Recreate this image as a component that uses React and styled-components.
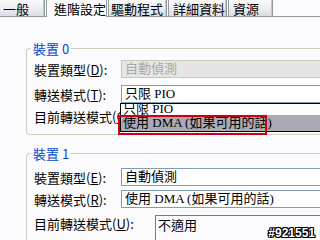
import React from "react";
import styled, { createGlobalStyle } from "styled-components";

const GlobalStyle = createGlobalStyle`
  html, body {
    margin: 0;
    padding: 0;
  }
  body {
    width: 320px;
    height: 240px;
    overflow: hidden;
    background: #fcfcfe;
    font-family: "Noto Sans CJK TC", "Liberation Sans", sans-serif;
  }
`;

const Window = styled.div`
  position: relative;
  width: 320px;
  height: 240px;
  overflow: hidden;
  background: #fcfcfe;
`;

const TabStrip = styled.div`
  display: flex;
  align-items: flex-end;
  gap: 1px;
  height: 20px;
  margin-top: -4px;
  margin-left: -2px;
  border-bottom: 1px solid #919b9c;
`;

const Tab = styled.div`
  flex: none;
  box-sizing: border-box;
  width: ${(p) => p.w}px;
  height: ${(p) => (p.active ? 21 : 20)}px;
  margin-bottom: ${(p) => (p.active ? -1 : 0)}px;
  padding: 4px 0 0 ${(p) => p.pad}px;
  border: 1px solid #919b9c;
  border-bottom: none;
  border-radius: 3px 3px 0 0;
  background: ${(p) =>
    p.active
      ? "#fcfcfe"
      : "linear-gradient(#ffffff 0%, #f3f3f6 45%, #dcdce6 100%)"};
  box-shadow: ${(p) => (p.active ? "none" : "inset -1px 0 #c4c4d2")};
  position: relative;
  z-index: ${(p) => (p.active ? 1 : 0)};
  font-size: 13px;
  line-height: 16px;
  color: #000;
  white-space: nowrap;
`;

const Panel = styled.div`
  padding: 25px 0 0 26px;
`;

const Group = styled.fieldset`
  box-sizing: border-box;
  width: 400px;
  min-width: 0;
  margin: 0 0 ${(p) => p.mb || 0}px 0;
  padding: ${(p) => p.pt}px 0 ${(p) => p.pb}px 7px;
  border: 1px solid #d0d0bf;
  border-right: none;
  border-radius: 4px 0 0 4px;
`;

const Legend = styled.legend`
  margin-left: -3px;
  padding: 0 2px;
  color: #0046d5;
  font-size: 13px;
  line-height: 13px;
`;

const Rows = styled.div`
  display: flex;
  flex-direction: column;
  gap: ${(p) => p.gap}px;
`;

const Row = styled.div`
  display: flex;
  align-items: ${(p) => (p.top ? "flex-start" : "center")};
  height: ${(p) => p.h || 18}px;
`;

const Label = styled.div`
  flex: none;
  width: ${(p) => p.w}px;
  margin-top: ${(p) => p.mt || 0}px;
  font-size: 13px;
  line-height: 15px;
  color: #000;
  white-space: nowrap;
  overflow: hidden;
`;

const Key = styled.span`
  text-decoration: underline;
`;

const Combo = styled.div`
  position: relative;
  flex: none;
  box-sizing: border-box;
  width: 260px;
  height: 18px;
  padding-left: 3px;
  border: 1px solid ${(p) => (p.disabled ? "#c9c7ba" : "#7f9db9")};
  background: ${(p) => (p.disabled ? "#e6e6e6" : "#ffffff")};
  color: ${(p) => (p.disabled ? "#a8a8a8" : "#000")};
  font-family: "Liberation Serif", "Noto Sans CJK TC", serif;
  font-size: 13px;
  line-height: 16px;
  white-space: nowrap;
`;

const DropList = styled.div`
  position: absolute;
  top: 100%;
  left: -2px;
  z-index: 2;
  box-sizing: border-box;
  width: 220px;
  margin-top: 1px;
  border: 1px solid #000;
  background: #fff;
`;

const Option = styled.div`
  height: ${(p) => p.h}px;
  padding-left: 2px;
  overflow: hidden;
  background: ${(p) => (p.selected ? "#aaaab4" : "#ffffff")};
  color: #000;
  line-height: ${(p) => p.lh}px;
`;

const Marker = styled.div`
  position: absolute;
  left: -3px;
  top: 11px;
  box-sizing: border-box;
  width: 149px;
  height: 20px;
  border: 2px solid #d2000f;
`;

const StaticBox = styled.div`
  flex: none;
  box-sizing: border-box;
  width: 220px;
  height: 26px;
  margin-top: 3px;
  padding: 1px 0 0 2px;
  border-top: 1px solid #7a7a7a;
  border-left: 1px solid #7a7a7a;
  font-size: 13px;
  line-height: 16px;
  color: #000;
`;

const Watermark = styled.div`
  position: absolute;
  right: 5px;
  bottom: 1px;
  font-family: "Liberation Sans", sans-serif;
  font-weight: bold;
  font-size: 12px;
  line-height: 12px;
  color: #fff;
  text-shadow: 1px 0 #000, -1px 0 #000, 0 1px #000, 0 -1px #000,
    1px 1px #000, -1px -1px #000, 1px -1px #000, -1px 1px #000;
`;

const tabs = [
  { name: "一般", w: 47, pad: 4 },
  { name: "進階設定", w: 61, pad: 7, active: true },
  { name: "驅動程式", w: 59, pad: 2 },
  { name: "詳細資料", w: 59, pad: 4 },
  { name: "資源", w: 45, pad: 4 },
];

export default function App() {
  return (
    <Window>
      <GlobalStyle />
      <TabStrip>
        {tabs.map((t) => (
          <Tab key={t.name} w={t.w} pad={t.pad} active={t.active}>
            {t.name}
          </Tab>
        ))}
      </TabStrip>
      <Panel>
        <Group pt={5} pb={12} mb={12}>
          <Legend>裝置 0</Legend>
          <Rows gap={7}>
            <Row>
              <Label w={87}>裝置類型(<Key>D</Key>):</Label>
              <Combo disabled>自動偵測</Combo>
            </Row>
            <Row>
              <Label w={87}>轉送模式(<Key>T</Key>):</Label>
              <Combo>
                只限 PIO
                <DropList>
                  <Option h={11} lh={10}>只限 PIO</Option>
                  <Option h={16} lh={16} selected>使用 DMA (如果可用的話)</Option>
                  <Marker />
                </DropList>
              </Combo>
            </Row>
            <Row h={12}>
              <Label w={87}>目前轉送模式(<Key>C</Key>):</Label>
            </Row>
          </Rows>
        </Group>
        <Group pt={8} pb={0}>
          <Legend>裝置 1</Legend>
          <Rows gap={4}>
            <Row>
              <Label w={87}>裝置類型(<Key>E</Key>):</Label>
              <Combo>自動偵測</Combo>
            </Row>
            <Row>
              <Label w={87}>轉送模式(<Key>R</Key>):</Label>
              <Combo>使用 DMA (如果可用的話)</Combo>
            </Row>
            <Row h={29} top>
              <Label w={121} mt={4}>目前轉送模式(<Key>U</Key>):</Label>
              <StaticBox>不適用</StaticBox>
            </Row>
          </Rows>
        </Group>
      </Panel>
      <Watermark>#921551</Watermark>
    </Window>
  );
}
